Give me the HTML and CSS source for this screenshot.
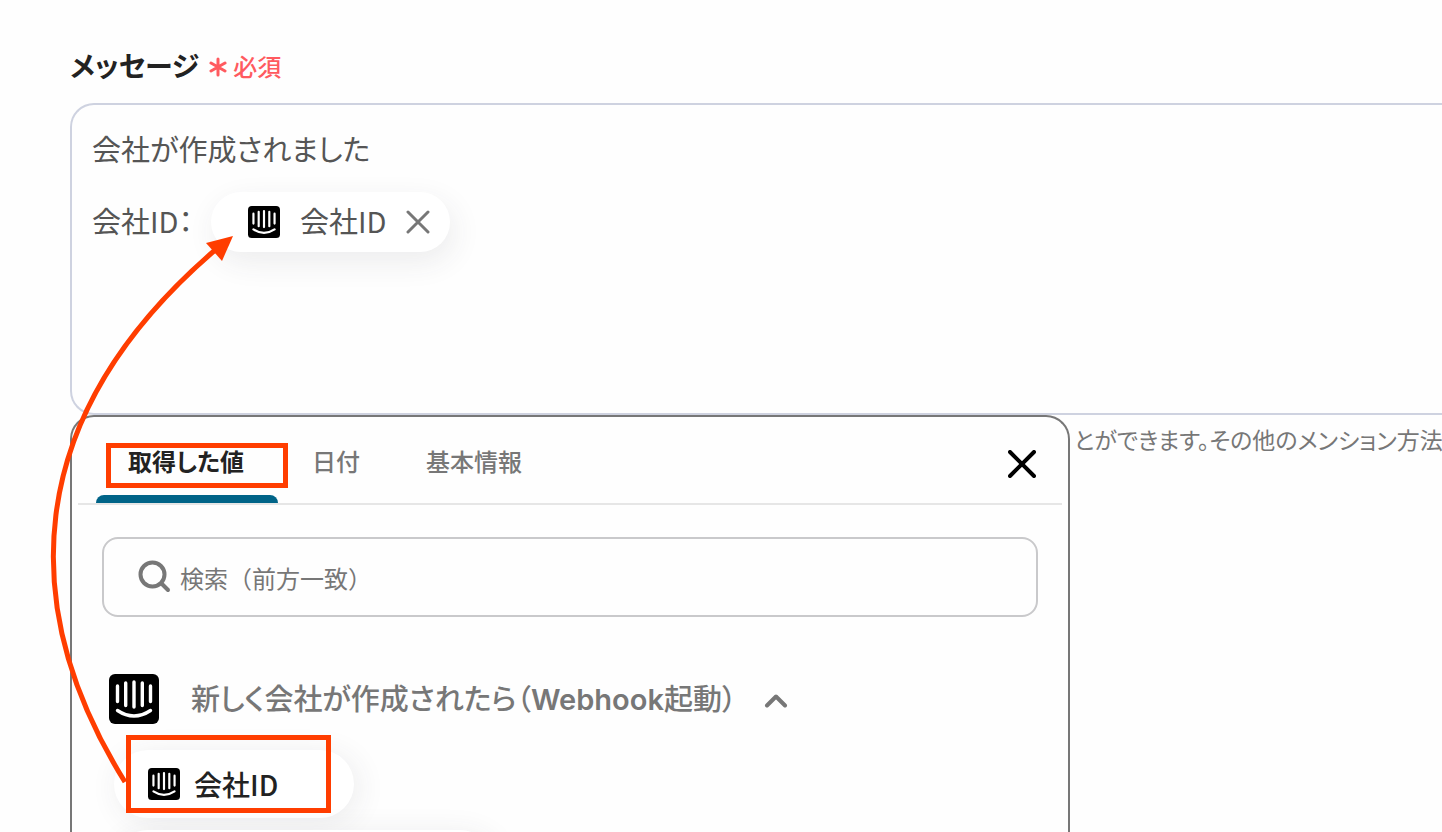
FILE: index.html
```html
<!DOCTYPE html>
<html lang="ja">
<head>
  <meta charset="UTF-8">
  <meta name="viewport" content="width=device-width, initial-scale=1.0">
  <title>メッセージ</title>
  <link rel="stylesheet" href="styles.css">
</head>
<body>

<!-- SHARED ICON -->
<svg class="sprite" aria-hidden="true">
  <symbol id="intercom" viewBox="0 0 50 50">
    <rect width="50" height="50" rx="6" fill="#000"/>
    <path d="M8.500 12v15.500M16.700 9v22.500M25 8v25M33.300 9v22.500M41.500 12v15.500M8.500 36.500q16.500 11 33 0" fill="none" stroke="#fff" stroke-width="3.400" stroke-linecap="round"/>
  </symbol>
</svg>

<main class="field">
  <div class="field-label">
    <span class="field-name" id="messageLabel">メッセージ</span>
    <span class="required">
      <svg width="18" height="24" viewBox="0 0 18 24" aria-hidden="true"><path d="M9 6v16M2 10l14 8M16 10l-14 8"/></svg>
      必須
    </span>
  </div>

  <!-- MESSAGE EDITOR -->
  <div class="editor" role="textbox" aria-multiline="true" aria-labelledby="messageLabel" contenteditable="true" spellcheck="false">
    <div class="editor-line">会社が作成されました</div>
    <div class="editor-line">
      <span>会社ID：</span>
      <span class="mention" contenteditable="false">
        <svg class="icon-small" aria-hidden="true"><use href="#intercom"/></svg>
        <span>会社ID</span>
        <button type="button" class="mention-remove" aria-label="削除">
          <svg width="24" height="24" viewBox="0 0 24 24"><path d="M2 2l20 20M22 2L2 22"/></svg>
        </button>
      </span>
    </div>
  </div>

  <div class="below">
    <!-- VALUE PICKER -->
    <section class="picker">
      <div class="picker-head">
        <div class="tabs" role="tablist">
          <button type="button" class="tab active" role="tab" aria-selected="true">取得した値</button>
          <button type="button" class="tab" role="tab" aria-selected="false">日付</button>
          <button type="button" class="tab" role="tab" aria-selected="false">基本情報</button>
        </div>
        <button type="button" class="close-btn" aria-label="閉じる">
          <svg width="28" height="28" viewBox="0 0 28 28"><path d="M2 2l24 24M26 2L2 26"/></svg>
        </button>
      </div>

      <label class="search">
        <svg width="34" height="34" viewBox="0 0 34 34" aria-hidden="true"><circle cx="14.500" cy="14.500" r="12"/><path d="M23.500 23.500l6.500 6.500"/></svg>
        <input type="search" aria-label="検索" placeholder="検索（前方一致）">
      </label>

      <button type="button" class="group" aria-expanded="true">
        <svg class="icon-large" aria-hidden="true"><use href="#intercom"/></svg>
        <span class="group-name">新しく会社が作成されたら（<span class="latin">Webhook</span>起動）</span>
        <svg class="chevron" width="24" height="18" viewBox="0 0 24 18" aria-hidden="true"><path d="M3 15.500l9-9 9 9"/></svg>
      </button>

      <div class="values">
        <button type="button" class="value">
          <svg class="icon-small" aria-hidden="true"><use href="#intercom"/></svg>
          会社ID
        </button>
        <div class="value value-next"></div>
      </div>
    </section>
    <p class="hint">とができます。その他のメンション方法</p>
  </div>
</main>

<!-- GUIDE MARKS -->
<svg class="guide" width="460" height="832" viewBox="0 0 460 832" aria-hidden="true">
  <rect x="108.500" y="445.500" width="177" height="40"/>
  <rect x="128.500" y="737.500" width="200" height="73"/>
  <path d="M125 782C18 610 18 420 214 251"/>
  <path class="guide-head" d="M233 236l-27 7 16 18z"/>
</svg>

</body>
</html>
```
FILE: styles.css
```css
* { box-sizing: border-box; }
body {
  margin: 0;
  height: 100vh;
  overflow: hidden;
  position: relative;
  background: #fefefe;
  color: #555;
  font-family: "Noto Sans CJK JP", sans-serif;
  font-size: 28px;
  font-feature-settings: "palt";
}
button, input { font: inherit; color: inherit; }
button {
  padding: 0; border: none;
  background: none; cursor: pointer;
  font-feature-settings: inherit;
}
svg { flex: none; display: block; }
.sprite { position: absolute; width: 0; height: 0; }
.icon-small { width: 32px; height: 32px; }
.icon-large { width: 50px; height: 50px; }

.field {
  display: flex; flex-direction: column;
  height: 100%;
  padding: 44px 0 0 70px;
}
.field-label {
  display: flex; align-items: center; gap: 10px;
  height: 42px; margin-bottom: 17px;
}
.field-name { color: #222; font-weight: 700; }
.required {
  display: flex; align-items: center; gap: 6px;
  color: #ff5a5f;
  font-size: 24px; font-weight: 500;
}
.required svg { fill: none; stroke: #ff5a5f; stroke-width: 3; stroke-linecap: round; }

/* message editor */
.editor {
  display: flex; flex-direction: column; gap: 12px;
  min-height: 312px;
  padding: 15px 20px;
  border: 2px solid #ced2e0; border-right: none;
  border-radius: 24px 0 0 24px;
  outline: none;
  font-size: 29px;
  line-height: 56px;
}
.editor-line { display: flex; height: 60px; gap: 18px; }
.mention {
  display: flex; align-items: center; gap: 20px;
  height: 60px; padding: 0 20px 0 37px;
  border-radius: 30px;
  background: #fff;
  box-shadow: 4px 10px 30px rgba(60, 50, 70, 0.09);
}
.mention span { height: 60px; }
.mention-remove svg { fill: none; stroke: #777; stroke-width: 3; stroke-linecap: round; }

/* value picker */
.below { display: flex; flex: 1; gap: 4px; min-height: 0; white-space: nowrap; }
.picker {
  flex: 0 0 1000px;
  overflow: hidden;
  border: 2px solid #777; border-bottom: none;
  border-radius: 24px 24px 0 0;
  background: #fefefe;
}
.picker-head {
  display: flex; justify-content: space-between;
  height: 88px; margin: 0 6px; padding: 8px 26px 0 18px;
  border-bottom: 2px solid #e6e6e6;
}
.tabs { display: flex; gap: 2px; }
.tab {
  padding: 0 32px 8px;
  color: #777;
  font-size: 24px; font-weight: 500;
  position: relative;
}
.tab.active { padding-right: 34px; color: #222; font-weight: 700; }
.tab.active::after {
  content: "";
  position: absolute; left: 0; right: 0; bottom: 0;
  height: 8px;
  border-radius: 8px 8px 0 0;
  background: #006488;
}
.close-btn svg { fill: none; stroke: #000; stroke-width: 4; stroke-linecap: round; }
.search {
  display: flex; align-items: center; gap: 8px;
  height: 80px; margin: 32px 30px 0; padding: 0 34px;
  border: 2px solid #c9c9cb; border-radius: 16px;
  color: #777;
}
.search svg { fill: none; stroke: #777; stroke-width: 4; stroke-linecap: round; }
.search input {
  flex: 1; min-width: 0;
  padding: 0; border: none; outline: none;
  background: none;
  font-size: 24px;
  font-feature-settings: normal;
}
.search input::placeholder { color: #777; opacity: 1; }
.group {
  display: flex; align-items: center;
  height: 50px; margin: 57px 37px 0;
  color: #777;
  font-size: 29px; font-weight: 500;
}
.group-name { margin: 0 28px 0 32px; padding-bottom: 4px; }
.latin { font-family: Inter, sans-serif; font-weight: 600; }
.chevron { fill: none; stroke: #777; stroke-width: 4; stroke-linecap: round; stroke-linejoin: round; }
.values {
  display: flex; flex-direction: column; align-items: flex-start; gap: 12px;
  padding: 26px 42px;
}
.value {
  display: flex; align-items: center; gap: 14px;
  height: 68px; padding: 0 76px 0 34px;
  border-radius: 34px;
  background: #fff;
  color: #222; font-weight: 500;
  box-shadow: 4px 4px 30px rgba(60, 50, 70, 0.09);
}
.value-next { width: 380px; }
.hint { margin: 8px 0 0; color: #777; font-size: 23px; line-height: 32px; }

.guide { position: absolute; top: 0; left: 0; pointer-events: none; fill: none; stroke: #ff3d00; stroke-width: 5; }
.guide-head { fill: #ff3d00; stroke: none; }
```
